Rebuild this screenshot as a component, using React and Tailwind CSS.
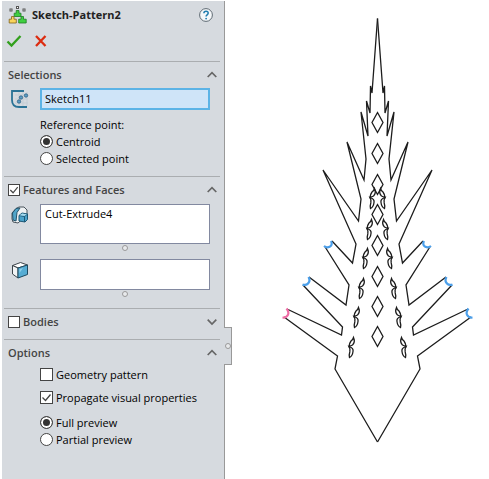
import React, { useState } from 'react';

const DIAMONDS = [122, 153, 184, 214, 245, 276, 306, 336];
const SCALES = [
  [369, 188],
  [366, 219],
  [362, 248],
  [358, 278],
  [353, 307],
  [348, 337],
];

const PatternIcon = () => (
  <svg width="20" height="18" viewBox="0 0 20 18" aria-hidden="true">
    <g fill="#fff" stroke="#555" strokeWidth="1">
      <rect x="2" y="3" width="2" height="2" />
      <rect x="8.500" y="0.500" width="2" height="2" />
      <rect x="15" y="3" width="2" height="2" />
    </g>
    <g strokeWidth="0.8">
      <path d="M8.200 4.500h2.800v2.700h2v3.300H6.200V7.200h2z" fill="#3fd040" stroke="#1e7a25" />
      <path d="M3.500 10.500h2.500v2.700h2.300V17H1.200v-3.800h2.300z" fill="#f9d45c" stroke="#80621a" />
      <path d="M13 10.500h2.500v2.700h2.700V17h-7.500v-3.800H13z" fill="#3fd040" stroke="#1e7a25" />
    </g>
  </svg>
);

const HelpIcon = () => (
  <svg width="16" height="16" viewBox="0 0 16 16" fill="none" aria-hidden="true">
    <circle cx="8" cy="8" r="6.4" fill="#f4f7f9" stroke="#5f6a73" strokeWidth="1" />
    <path d="M5.900 6.300c0-2.800 4.300-2.700 4.300-.2 0 1.700-2.100 1.700-2.100 3.400" stroke="#1f7cae" strokeWidth="1.5" />
    <circle cx="8.1" cy="11.6" r="0.9" fill="#1f7cae" />
  </svg>
);

const SketchIcon = () => (
  <svg width="20" height="20" viewBox="0 0 20 20" fill="none" aria-hidden="true">
    <path d="M5 6h13M5 10h13M5 14h13M9 3v14M13 3v14M17 3v14" stroke="#c5ced5" strokeWidth="1" />
    <path d="M14 2H2v9c0 4.500 2.500 7 7 7h8" stroke="#2b7396" strokeWidth="1.8" />
    <g fill="#5b9dc4" stroke="#2d5f84" strokeWidth="0.8">
      <circle cx="9" cy="12.500" r="1.700" />
      <circle cx="11" cy="8.500" r="1.700" />
      <circle cx="16" cy="6.500" r="1.700" />
    </g>
  </svg>
);

const FeaturesIcon = () => (
  <svg width="18" height="18" viewBox="0 0 18 18" strokeLinejoin="round" aria-hidden="true">
    <path d="M5 2.500 8 1h5l3 3v5l-9 8-5-1-1-3V7z" fill="#eef1f3" stroke="#4a545c" />
    <path d="M1.500 7 5 2.500 9 2 6 6.500 5 15l-3-1z" fill="#52a5c9" stroke="#24536b" />
    <path d="M8 9.500 11 7l5.500 1v5.500L14 16l-6-1z" fill="#4ba3cb" stroke="#1d5876" />
    <path d="M8 9.500l5.500 1V16M13.500 10.500l3-2.500" fill="none" stroke="#1d5876" />
    <path d="m8.500 9.300 2.700-1.800 4.700.8-2.500 1.700z" fill="#a6daee" />
  </svg>
);

const FaceIcon = () => (
  <svg width="18" height="18" viewBox="0 0 18 18" strokeLinejoin="round" aria-hidden="true">
    <path d="m1.500 4.500 8-3 7 2.500-9.500 3z" fill="#fff" stroke="#3c444a" />
    <path d="M1.500 4.500 7 7v10l-5.500-4z" fill="#f2f4f5" stroke="#3c444a" />
    <path d="m7 7 9.500-3v9.500L7 17z" fill="#56acd3" stroke="#1d4a61" />
    <path d="m8.500 8.200 3.500-1.200-3.500 5z" fill="#8fd0ea" />
  </svg>
);

const Chevron = ({ open }) => (
  <svg width="10" height="8" viewBox="0 0 10 8" fill="none" stroke="#666" strokeWidth="1.7" aria-hidden="true">
    <path d={open ? 'M.7 6 5 1.700 9.300 6' : 'M.7 1.700 5 6l4.300-4.300'} />
  </svg>
);

const Checkbox = ({ label, defaultChecked, bold }) => (
  <label className={`flex h-[17px] items-center gap-[3px] ${bold ? 'font-semibold text-[#444]' : ''}`}>
    <span className="relative flex">
      <input
        type="checkbox"
        defaultChecked={defaultChecked}
        className={`peer appearance-none border border-[#444] bg-white ${bold ? 'size-3' : 'size-[13px]'}`}
      />
      <svg
        viewBox="0 0 13 13"
        fill="none"
        stroke="#444"
        strokeWidth="1.3"
        className="pointer-events-none invisible absolute inset-0 size-full peer-checked:visible"
      >
        <path d="m2.500 6.500 3 3 5-6" />
      </svg>
    </span>
    {label}
  </label>
);

const Radio = ({ name, label, defaultChecked }) => (
  <label className="flex h-[17px] items-center gap-[3px]">
    <input
      type="radio"
      name={name}
      defaultChecked={defaultChecked}
      className="size-[13px] appearance-none rounded-full border border-[#444] bg-white checked:bg-[#333] checked:shadow-[inset_0_0_0_2px_white]"
    />
    {label}
  </label>
);

const Section = ({ title, checkbox, checked, defaultOpen = true, children }) => {
  const [open, setOpen] = useState(defaultOpen);

  return (
    <section className="border-t border-[#aaadb0]">
      <div className="flex h-[26px] items-center justify-between pr-[3px] pl-1">
        {checkbox ? (
          <Checkbox label={title} defaultChecked={checked} bold />
        ) : (
          <h2 className="font-semibold text-[#444]">{title}</h2>
        )}
        <button type="button" aria-label={`Toggle ${title}`} aria-expanded={open} onClick={() => setOpen(!open)}>
          <Chevron open={open} />
        </button>
      </div>
      {open && children}
    </section>
  );
};

const Grip = () => (
  <div className="flex h-[15px] justify-center">
    <span className="mt-px size-1.5 rounded-full border border-[#999] bg-[#e8eaec]" />
  </div>
);

const Spikes = () => (
  <>
    <path d="M377.500 18.500 372 93l-1.500-7-.5 27-3.500-12 1.500 35-7-24 5 47-2 21-17-38 14 57-2.500 22-35.500-51 33 74-3.500 19-20.500-22M324.500 246l24.500 39-3 20-37-28M303 285l39.500 42-1 8-54.500-26M284 317l53.500 39-2.500 13 42.500 73" />
    {SCALES.map(([x, y]) => (
      <g key={y} transform={`translate(${x} ${y})`} strokeWidth="1.3">
        <path d="M5.500.5Q7.500 5 4.500 8L1 9.500Q1.500 6 3 4 5 2.500 5.500.5z" />
        <path d="M1 9.500q4.800 1.500 4 5-.5 4.500-3.500 6-.7-2.500.3-5.500.7-3-.8-5.500z" />
      </g>
    ))}
  </>
);

const Preview = () => (
  <svg
    viewBox="225 0 264 479"
    className="h-full w-full"
    fill="none"
    stroke="#1c1c1c"
    strokeWidth="1.3"
    role="img"
    aria-label="Pattern preview"
  >
    <Spikes />
    <g transform="matrix(-1 0 0 1 755 0)">
      <Spikes />
    </g>
    {DIAMONDS.map((y) => (
      <path key={y} d={`M377.500 ${y - 9.5}l5.500 10-5.500 10-5.500-10z`} />
    ))}
    <g stroke="#4b9fea" strokeWidth="2.2">
      <path d="M324 246c3 2.500 10 1 7-5M302.500 284.500c4 1.500 9-2 6-7.500" />
      <path d="M431 246c-3 2.500-10 1-7-5M452.500 284.500c-4 1.500-9-2-6-7.500M472.500 317.500c-5 .5-8-4-4-9" />
    </g>
    <path d="M282.500 317.500c5 .5 8-4 4-9" stroke="#ef6ca5" strokeWidth="2.2" />
  </svg>
);

const App = () => (
  <div className="flex min-h-screen bg-white pt-px pl-0.5 font-['Open_Sans','Noto_Sans',sans-serif] text-[11px] leading-4 text-black">
    <aside className="relative w-[223px] shrink-0 border-r border-[#999] bg-[#d6dadf] pr-1 pl-0.5">
      <header>
        <div className="flex h-[27px] items-center gap-1 pr-1.5 pl-1">
          <PatternIcon />
          <h1 className="font-bold text-[#222]">Sketch-Pattern2</h1>
          <button type="button" aria-label="Help" className="ml-auto">
            <HelpIcon />
          </button>
        </div>
        <div className="flex h-[33px] items-start gap-3 pt-1.5 pl-0.5">
          <button type="button" aria-label="OK">
            <svg width="16" height="14" viewBox="0 0 16 14" fill="none" stroke="#32a01d" strokeWidth="2.3">
              <path d="m1.500 7.500 4 4L14.500 2" />
            </svg>
          </button>
          <button type="button" aria-label="Cancel">
            <svg width="14" height="14" viewBox="0 0 14 14" fill="none" stroke="#dc2c10" strokeWidth="2.300">
              <path d="m2 2 9.500 10M11.500 2 2 12" />
            </svg>
          </button>
        </div>
      </header>

      <Section title="Selections">
        <div className="flex items-center pr-2.5 pl-1.5">
          <SketchIcon />
          <input
            type="text"
            aria-label="Pattern sketch"
            defaultValue="Sketch11"
            className="ml-2.5 h-[22px] min-w-0 flex-1 border-2 border-[#5cb3e6] bg-[#cfe4f8] px-[3px] pb-0.5"
          />
        </div>
        <fieldset className="mt-[7px] pb-[9px] pl-9">
          <legend>Reference point:</legend>
          <Radio name="reference" label="Centroid" defaultChecked />
          <Radio name="reference" label="Selected point" />
        </fieldset>
      </Section>

      <Section title="Features and Faces" checkbox checked>
        <div className="flex pt-px pr-2.5 pl-[7px]">
          <div className="mt-0.5 mr-[11px]">
            <FeaturesIcon />
          </div>
          <div className="flex-1">
            <textarea
              aria-label="Features to pattern"
              defaultValue="Cut-Extrude4"
              className="block h-10 w-full resize-none border border-[#8289a0] bg-white px-1 py-px"
            />
            <Grip />
          </div>
        </div>
        <div className="flex pr-2.5 pb-[3px] pl-[7px]">
          <div className="mt-0.5 mr-[11px]">
            <FaceIcon />
          </div>
          <div className="flex-1">
            <textarea
              aria-label="Faces to pattern"
              className="block h-[31px] w-full resize-none border border-[#8289a0] bg-white px-1 py-px"
            />
            <Grip />
          </div>
        </div>
      </Section>

      <div className="pb-1">
        <Section title="Bodies" checkbox defaultOpen={false} />
      </div>

      <Section title="Options">
        <div className="flex flex-col gap-1.5 pl-9">
          <Checkbox label="Geometry pattern" />
          <Checkbox label="Propagate visual properties" defaultChecked />
        </div>
        <div className="mt-2 pl-9">
          <Radio name="preview" label="Full preview" defaultChecked />
          <Radio name="preview" label="Partial preview" />
        </div>
      </Section>

      <button
        type="button"
        aria-label="Collapse panel"
        className="absolute top-[326px] left-full flex h-[38px] w-2 items-center justify-center border border-l-0 border-[#999] bg-[#d6dadf]"
      >
        <span className="size-1.5 shrink-0 rounded-full border border-[#999] bg-[#e8eaec]" />
      </button>
    </aside>

    <main className="-mt-px min-w-0 flex-1">
      <Preview />
    </main>
  </div>
);

export default App;
